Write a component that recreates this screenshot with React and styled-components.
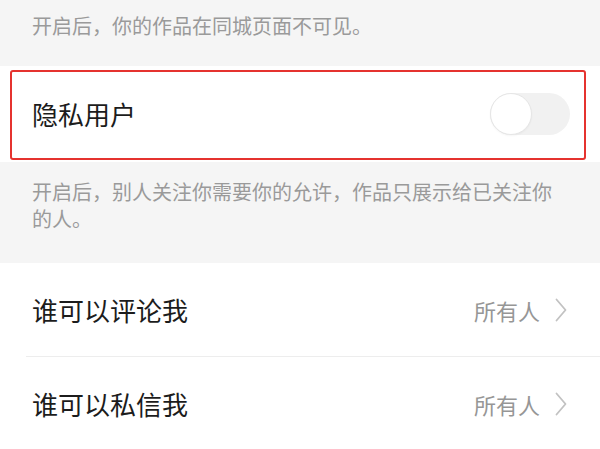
import React, { useState } from "react";
import styled, { createGlobalStyle } from "styled-components";

const GlobalStyle = createGlobalStyle`
    html, body {
        margin: 0;
        padding: 0;
        background: #f5f5f5;
        font-family: "Noto Sans CJK SC", "Noto Sans", sans-serif;
    }
`;

const Page = styled.div`
    width: 600px;
    height: 449px;
    overflow: hidden;
    background: #f5f5f5;
`;

const Note = styled.div`
    padding: ${(p) => p.$pad};
    padding-left: 32px;
    padding-right: 32px;
    font-size: 20px;
    line-height: 27px;
    color: #9a9a9a;
`;

const SwitchRow = styled.div`
    position: relative;
    height: 96px;
    padding: 0 30px 0 32px;
    box-sizing: border-box;
    display: flex;
    align-items: center;
    justify-content: space-between;
    background: #fff;
`;

// red annotation box drawn over the row
const Highlight = styled.div`
    position: absolute;
    top: 4px;
    bottom: 2px;
    left: 10px;
    right: 14px;
    border: 2px solid #e5332f;
    border-radius: 3px;
    pointer-events: none;
`;

const Title = styled.span`
    font-size: 26px;
    color: #1c1c1c;
    line-height: 1;
`;

const Track = styled.button`
    position: relative;
    width: 80px;
    height: 42px;
    border: none;
    padding: 0;
    border-radius: 21px;
    background: ${(p) => (p.$on ? "#fe2c55" : "#f1f1f1")};
    cursor: pointer;
`;

const Knob = styled.span`
    position: absolute;
    top: 0;
    left: ${(p) => (p.$on ? "38px" : "0")};
    width: 42px;
    height: 42px;
    box-sizing: border-box;
    border-radius: 50%;
    background: #fff;
    border: 1px solid #e6e6e6;
    box-shadow: 0 1px 2px rgba(0, 0, 0, 0.04);
    transition: left 0.2s;
`;

const List = styled.div`
    background: #fff;
`;

const Row = styled.div`
    height: 93px;
    padding: 0 33px 0 32px;
    display: flex;
    align-items: center;
    justify-content: space-between;
`;

const Divider = styled.div`
    height: 1px;
    margin-left: 26px;
    background: #ededed;
`;

const Value = styled.span`
    display: flex;
    align-items: center;
    gap: 15px;
    font-size: 22px;
    color: #969696;
`;

const Chevron = () => (
    <svg width="12" height="24" viewBox="0 0 12 24" fill="none">
        <path d="M1.5 1.5 L10.5 12 L1.5 22.5" stroke="#c2c2c2" strokeWidth="1.8" strokeLinecap="round" strokeLinejoin="round" />
    </svg>
);

const options = [
    { label: "谁可以评论我", value: "所有人" },
    { label: "谁可以私信我", value: "所有人" },
];

const App = () => {
    const [privateUser, setPrivateUser] = useState(false);

    return (
        <Page>
            <GlobalStyle />
            <Note $pad="12px 0 27px">开启后，你的作品在同城页面不可见。</Note>
            <SwitchRow>
                <Title>隐私用户</Title>
                <Track $on={privateUser} onClick={() => setPrivateUser(!privateUser)}>
                    <Knob $on={privateUser} />
                </Track>
                <Highlight />
            </SwitchRow>
            <Note $pad="16px 0 31px">
                开启后，别人关注你需要你的允许，作品只展示给已关注你的人。
            </Note>
            <List>
                {options.map((item, i) => (
                    <React.Fragment key={item.label}>
                        {i > 0 && <Divider />}
                        <Row>
                            <Title>{item.label}</Title>
                            <Value>
                                {item.value}
                                <Chevron />
                            </Value>
                        </Row>
                    </React.Fragment>
                ))}
            </List>
        </Page>
    );
};

export default App;
